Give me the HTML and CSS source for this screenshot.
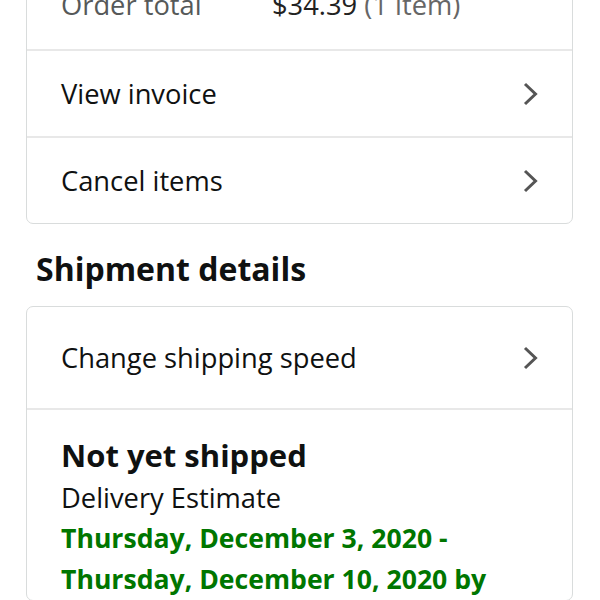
FILE: index.html
```html
<!DOCTYPE html>
<html>
<head>
<meta charset="utf-8">
<link rel="stylesheet" href="styles.css">
</head>
<body>
<div class="page">
  <div class="card card-top">
    <div class="row row-total">
      <span class="label">Order total</span>
      <span class="value">$34.39 <span class="count">(1 item)</span></span>
    </div>
    <div class="row link-row">
      <span>View invoice</span>
      <svg class="chev" viewBox="0 0 18 24" width="18" height="24"><path d="M3 2 L13.5 12 L3 22" fill="none" stroke="#555" stroke-width="3"/></svg>
    </div>
    <div class="row link-row">
      <span>Cancel items</span>
      <svg class="chev" viewBox="0 0 18 24" width="18" height="24"><path d="M3 2 L13.5 12 L3 22" fill="none" stroke="#555" stroke-width="3"/></svg>
    </div>
  </div>
  <h2 class="section-title">Shipment details</h2>
  <div class="card">
    <div class="row link-row speed-row">
      <span>Change shipping speed</span>
      <svg class="chev" viewBox="0 0 18 24" width="18" height="24"><path d="M3 2 L13.5 12 L3 22" fill="none" stroke="#555" stroke-width="3"/></svg>
    </div>
    <div class="shipment">
      <div class="status">Not yet shipped</div>
      <div class="est-label">Delivery Estimate</div>
      <div class="est-date">Thursday, December 3, 2020 - Thursday, December 10, 2020 by</div>
    </div>
  </div>
</div>
</body>
</html>
```
FILE: styles.css
```css
html, body {
  margin: 0;
  padding: 0;
  background: #fff;
}
body {
  font-family: "Open Sans", "Liberation Sans", sans-serif;
  color: #0f1111;
  font-size: 27.3px;
  overflow: hidden;
}
.page {
  padding: 0 27px 0 26px;
}
.card {
  border: 1px solid #d9dcdc;
  border-radius: 7px;
  background: #fff;
}
.card-top {
  margin-top: -12px;
}
.row {
  display: flex;
  align-items: center;
  padding: 0 34px 0 34px;
  line-height: 32px;
}
.row + .row {
  border-top: 2px solid #e8e8e8;
}
.row-total {
  align-items: flex-start;
  padding-bottom: 28px;
}
.row-total .label {
  width: 211px;
  flex: none;
  color: #565959;
}
.row-total .value {
  color: #222;
}
.row-total .count {
  color: #666;
}
.link-row {
  justify-content: space-between;
  height: 85px;
}
.chev {
  display: block;
  margin-right: -2px;
}
.section-title {
  margin: 27px 0 19px 10px;
  font-size: 32px;
  line-height: 36px;
  font-weight: 700;
}
.speed-row {
  height: 101px;
}
.shipment {
  border-top: 2px solid #e8e8e8;
  padding: 25px 34px 0 34px;
}
.status {
  font-size: 31px;
  font-weight: 700;
  line-height: 40px;
}
.est-label {
  margin-top: 2px;
  line-height: 41px;
}
.est-date {
  color: #007600;
  font-size: 26.6px;
  font-weight: 700;
  line-height: 41px;
}
```
